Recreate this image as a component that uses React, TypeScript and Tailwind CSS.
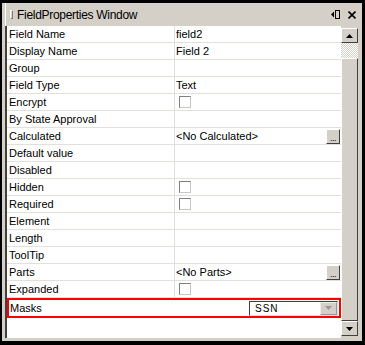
import React from 'react';

type Row = {
  label: string;
  value?: string;
  check?: boolean;
  browse?: boolean;
};

const rows: Row[] = [
  { label: 'Field Name', value: 'field2' },
  { label: 'Display Name', value: 'Field 2' },
  { label: 'Group' },
  { label: 'Field Type', value: 'Text' },
  { label: 'Encrypt', check: true },
  { label: 'By State Approval' },
  { label: 'Calculated', value: '<No Calculated>', browse: true },
  { label: 'Default value' },
  { label: 'Disabled' },
  { label: 'Hidden', check: true },
  { label: 'Required', check: true },
  { label: 'Element' },
  { label: 'Length' },
  { label: 'ToolTip' },
  { label: 'Parts', value: '<No Parts>', browse: true },
  { label: 'Expanded', check: true },
];

const Checkbox = () => (
  <div className="ml-[3px] w-[12px] h-[12px] bg-white border border-t-[#808080] border-l-[#808080] border-r-[#c8c6c0] border-b-[#c8c6c0]" />
);

const BrowseButton = () => (
  <div className="ml-auto mr-[1px] w-[14px] h-[15px] bg-[#d4d0c8] border border-t-white border-l-white border-r-[#404040] border-b-[#404040] flex items-end justify-center">
    <span className="text-[9px] leading-[9px] tracking-[-0.5px]">...</span>
  </div>
);

const PropRow = ({ row }: { row: Row }) => (
  <div className="flex h-[17px] border-b border-[#e2e0da]">
    <div className="w-[168px] shrink-0 pl-[2px] border-r border-[#e2e0da] flex items-center">{row.label}</div>
    <div className="flex-1 flex items-center pl-[1px]">
      {row.value && <span>{row.value}</span>}
      {row.check && <Checkbox />}
      {row.browse && <BrowseButton />}
    </div>
  </div>
);

const ScrollArrow = ({ down = false }: { down?: boolean }) => (
  <div className="w-[17px] h-[15px] bg-[#d4d0c8] border border-t-white border-l-white border-r-[#404040] border-b-[#404040] flex items-center justify-center">
    <svg width="7" height="4" viewBox="0 0 7 4">
      {down ? <path d="M0 0h7L3.5 4z" fill="#000" /> : <path d="M0 4h7L3.5 0z" fill="#000" />}
    </svg>
  </div>
);

export default function App() {
  return (
    <div
      className="w-[365px] h-[345px] bg-black pt-[3px] pl-[2px] pr-[3px] pb-[4px] text-[11px] text-black"
      style={{ fontFamily: '"Liberation Sans", Arial, sans-serif' }}
    >
      <div className="h-full bg-[#d4d0c8] pl-[3px] pb-[3px] flex flex-col">
        {/* title bar */}
        <div className="h-[23px] shrink-0 flex items-center border-l border-white pr-[6px]">
          <div className="ml-[4px] w-[3px] h-[9px] border-l border-t border-white border-r border-b border-r-[#808080] border-b-[#808080]" />
          <span className="ml-[4px] text-[12px] tracking-[-0.3px]">FieldProperties Window</span>
          <div className="ml-auto flex items-center gap-[8px]">
            <svg width="9" height="9" viewBox="0 0 9 9">
              <path d="M0 4.5L3 1.5v6z" fill="#000" />
              <rect x="4.5" y="0.5" width="4" height="8" fill="none" stroke="#000" />
            </svg>
            <svg width="8" height="8" viewBox="0 0 8 8">
              <path d="M0.5 0.5l7 7M7.5 0.5l-7 7" stroke="#000" strokeWidth="1.6" />
            </svg>
          </div>
        </div>

        {/* grid + scrollbar */}
        <div className="flex-1 flex border-l-2 border-[#404040] pr-[4px]">
          <div className="flex-1 bg-white flex flex-col">
            {rows.map((r) => (
              <PropRow key={r.label} row={r} />
            ))}
            <div className="flex items-center h-[20px] border-2 border-[#ff0000]">
              <div className="w-[166px] shrink-0 pl-[1px]">Masks</div>
              <div className="ml-auto mr-[1px] w-[89px] h-[15px] flex items-center bg-white border border-t-[#404040] border-l-[#404040] border-r-[#e0ded8] border-b-[#e0ded8]">
                <span className="ml-[5px] text-[10px] tracking-[1px]">SSN</span>
                <div className="ml-auto w-[17px] h-[13px] bg-[#d4d0c8] border border-t-[#f0eee8] border-l-[#f0eee8] border-r-[#9a9890] border-b-[#9a9890] flex items-center justify-center">
                  <svg width="7" height="4" viewBox="0 0 7 4">
                    <path d="M0 0h7L3.5 4z" fill="#9a9890" />
                  </svg>
                </div>
              </div>
            </div>
          </div>
          <div className="w-[17px] flex flex-col pt-[2px] pb-[2px] bg-[#d4d0c8]">
            <ScrollArrow />
            <div className="h-[15px] bg-[repeating-conic-gradient(#d4d0c8_0_25%,#ffffff_0_50%)] bg-[length:2px_2px]" />
            <div className="flex-1 bg-[#d4d0c8] border border-t-white border-l-white border-r-[#404040] border-b-[#404040]" />
            <ScrollArrow down />
          </div>
        </div>
      </div>
    </div>
  );
}
